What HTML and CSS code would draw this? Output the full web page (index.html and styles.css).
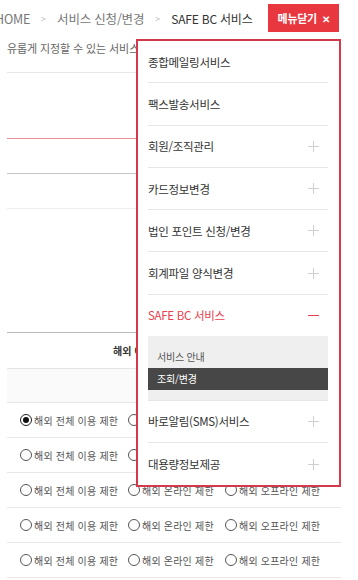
FILE: index.html
```html
<!DOCTYPE html>
<html lang="ko">
<head>
<meta charset="utf-8">
<link rel="stylesheet" href="styles.css">
</head>
<body>
<div class="page">
  <header class="top">
    <nav class="crumbs">
      <span class="crumb">HOME</span>
      <span class="sep">&gt;</span>
      <span class="crumb">서비스 신청/변경</span>
      <span class="sep">&gt;</span>
      <span class="crumb current">SAFE BC 서비스</span>
    </nav>
    <button class="close-btn">메뉴닫기 <span class="x">✕</span></button>
  </header>
  <p class="desc">유롭게 지정할 수 있는 서비스를 선택하세요.</p>

  <div class="band band-a"></div>
  <div class="band band-b"></div>
  <div class="band band-c"></div>
  <div class="band band-d"></div>

  <div class="grid">
    <div class="g-head">해외 이용 제한 설정</div>
    <div class="g-sub"></div>
    <div class="g-row">
      <label class="opt o1"><span class="radio on"></span>해외 전체 이용 제한</label>
      <label class="opt o2"><span class="radio"></span>해외 온라인 제한</label>
      <label class="opt"><span class="radio"></span>해외 오프라인 제한</label>
    </div>
    <div class="g-row">
      <label class="opt o1"><span class="radio"></span>해외 전체 이용 제한</label>
      <label class="opt o2"><span class="radio"></span>해외 온라인 제한</label>
      <label class="opt"><span class="radio"></span>해외 오프라인 제한</label>
    </div>
    <div class="g-row">
      <label class="opt o1"><span class="radio"></span>해외 전체 이용 제한</label>
      <label class="opt o2"><span class="radio"></span>해외 온라인 제한</label>
      <label class="opt"><span class="radio"></span>해외 오프라인 제한</label>
    </div>
    <div class="g-row">
      <label class="opt o1"><span class="radio"></span>해외 전체 이용 제한</label>
      <label class="opt o2"><span class="radio"></span>해외 온라인 제한</label>
      <label class="opt"><span class="radio"></span>해외 오프라인 제한</label>
    </div>
    <div class="g-row">
      <label class="opt o1"><span class="radio"></span>해외 전체 이용 제한</label>
      <label class="opt o2"><span class="radio"></span>해외 온라인 제한</label>
      <label class="opt"><span class="radio"></span>해외 오프라인 제한</label>
    </div>
  </div>
</div>

<div class="menu">
  <ul class="menu-list">
    <li class="item"><span>종합메일링서비스</span></li>
    <li class="item"><span>팩스발송서비스</span></li>
    <li class="item"><span>회원/조직관리</span><i class="plus"></i></li>
    <li class="item"><span>카드정보변경</span><i class="plus"></i></li>
    <li class="item"><span>법인 포인트 신청/변경</span><i class="plus"></i></li>
    <li class="item"><span>회계파일 양식변경</span><i class="plus"></i></li>
    <li class="item open"><span>SAFE BC 서비스</span><i class="minus"></i></li>
    <li class="submenu">
      <div class="sub-item">서비스 안내</div>
      <div class="sub-item active">조회/변경</div>
    </li>
    <li class="item"><span>바로알림(SMS)서비스</span><i class="plus"></i></li>
    <li class="item last"><span>대용량정보제공</span><i class="plus"></i></li>
  </ul>
</div>
</body>
</html>
```

FILE: styles.css
```css
* { box-sizing: border-box; }
html, body { margin: 0; padding: 0; background: #fff; }
body {
  font-family: "Noto Sans CJK KR", "Noto Sans", sans-serif;
  color: #333;
  width: 358px;
  height: 580px;
  overflow: hidden;
  position: relative;
}
.page { padding-left: 7px; width: 341px; }

.top {
  height: 36px;
  display: flex;
  align-items: center;
  justify-content: space-between;
  padding-right: 2px;
}
.crumbs {
  display: flex;
  align-items: center;
  margin-left: -12px;
  font-size: 12.5px;
  color: #777;
  white-space: nowrap;
}
.crumb { letter-spacing: -0.2px; }
.crumb.current { color: #333; font-size: 12px; }
.sep { color: #bbb; font-size: 9px; margin: 0 11px; }
.close-btn {
  border: 0;
  background: #e8373f;
  color: #fff;
  font-family: inherit;
  font-weight: 700;
  font-size: 11px;
  height: 28px;
  width: 71px;
  padding: 0;
  letter-spacing: -0.3px;
}
.close-btn .x { font-size: 10px; font-weight: 700; margin-left: 2px; }

.desc {
  margin: 4px 0 0;
  line-height: 16px;
  font-size: 11px;
  color: #666;
  white-space: nowrap;
  letter-spacing: -0.1px;
}

.band { border-top: 1px solid #e8e8e8; }
.band-a { margin-top: 16px; height: 66px; }
.band-b { height: 35px; border-top-color: #ec8f98; }
.band-c { height: 35px; border-top-color: #c4c4c4; }
.band-d { height: 124px; border-top-color: #eeeeee; }

.grid { border-top: 1px solid #bbb; }
.g-head {
  height: 36px;
  display: flex;
  align-items: center;
  padding-left: 106px;
  font-size: 10px;
  font-weight: 700;
  color: #333;
  border-bottom: 1px solid #e5e5e5;
}
.g-sub { height: 34px; background: #fafafa; border-bottom: 1px solid #e5e5e5; }
.g-row {
  height: 35px;
  display: flex;
  align-items: center;
  padding-left: 13px;
  border-bottom: 1px solid #e8e8e8;
  font-size: 10px;
  color: #555;
  white-space: nowrap;
}
.opt { display: flex; align-items: center; letter-spacing: 0.2px; }
.opt.o1 { width: 108px; }
.opt.o2 { width: 97px; }
.radio {
  width: 12px;
  height: 12px;
  border: 1px solid #555;
  border-radius: 50%;
  margin-right: 2px;
  display: inline-flex;
  align-items: center;
  justify-content: center;
  background: #fff;
}
.radio.on { border-color: #222; }
.radio.on::after {
  content: "";
  width: 6px;
  height: 6px;
  border-radius: 50%;
  background: #111;
}

.menu {
  position: absolute;
  left: 136px;
  top: 39px;
  width: 205px;
  height: 448px;
  border: 2px solid #d23a4b;
  background: #fff;
}
.menu-list {
  list-style: none;
  margin: 0;
  padding: 0 11px 0 10px;
}
.item {
  height: 42.3px;
  display: flex;
  align-items: center;
  justify-content: space-between;
  border-bottom: 1px solid #e6e6e6;
  font-size: 11.5px;
  color: #333;
  letter-spacing: -0.3px;
  white-space: nowrap;
}
.item.open { color: #e8414d; border-bottom: 0; height: 41px; }
.item.last { border-bottom: 0; }
.plus, .minus {
  position: relative;
  width: 11px;
  height: 11px;
  margin-right: 9px;
}
.plus::before, .plus::after, .minus::before {
  content: "";
  position: absolute;
  background: #cfcfcf;
}
.plus::before { left: 0; right: 0; top: 5px; height: 1px; }
.plus::after { top: 0; bottom: 0; left: 5px; width: 1px; }
.minus::before { left: 0; right: 0; top: 5px; height: 1px; background: #e8414d; }

.submenu {
  background: #efefef;
  padding: 10px 0;
  border-bottom: 1px solid #e6e6e6;
}
.sub-item {
  height: 22px;
  line-height: 22px;
  padding-left: 9px;
  font-size: 10px;
  color: #555;
  letter-spacing: -0.2px;
}
.sub-item.active { background: #474747; color: #fff; }
```
